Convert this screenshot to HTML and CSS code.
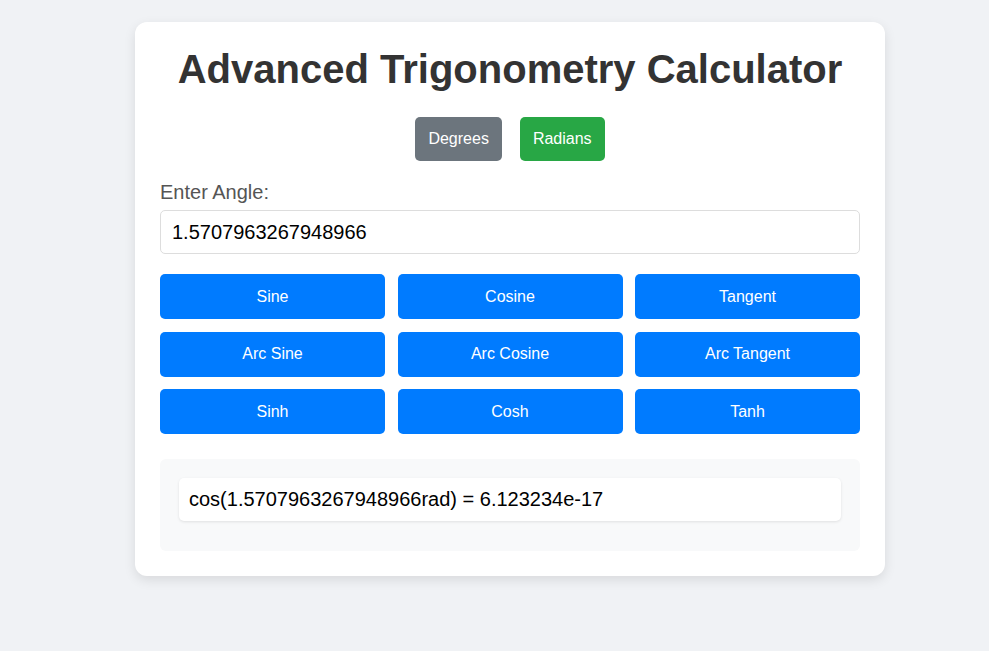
FILE: index.html
```html
<!DOCTYPE html>
<html lang="en">
<head>
<meta charset="utf-8">
<title>Advanced Trigonometry Calculator</title>
<link rel="stylesheet" href="styles.css">
</head>
<body>
<div class="card">
  <h1 class="title">Advanced Trigonometry Calculator</h1>
  <div class="modes">
    <button class="mode mode-deg">Degrees</button>
    <button class="mode mode-rad">Radians</button>
  </div>
  <label class="label" for="angle">Enter Angle:</label>
  <input class="input" id="angle" type="text" value="1.5707963267948966">
  <div class="grid">
    <button class="fn">Sine</button>
    <button class="fn">Cosine</button>
    <button class="fn">Tangent</button>
    <button class="fn">Arc Sine</button>
    <button class="fn">Arc Cosine</button>
    <button class="fn">Arc Tangent</button>
    <button class="fn">Sinh</button>
    <button class="fn">Cosh</button>
    <button class="fn">Tanh</button>
  </div>
  <div class="results">
    <div class="result">cos(1.5707963267948966rad) = 6.123234e-17</div>
  </div>
</div>
</body>
</html>
```

FILE: styles.css
```css
* { box-sizing: border-box; }
html, body { margin: 0; padding: 0; }
body {
  background: #f0f2f5;
  font-family: "Liberation Sans", Arial, sans-serif;
  height: 651px;
  overflow: hidden;
}
.card {
  width: 750px;
  margin: 22px 0 0 135px;
  padding: 25px;
  background: #fff;
  border-radius: 12px;
  box-shadow: 0 4px 12px rgba(0, 0, 0, 0.1);
}
.title {
  margin: 0;
  font-size: 40px;
  line-height: 45px;
  font-weight: bold;
  color: #333;
  text-align: center;
}
.modes {
  display: flex;
  justify-content: center;
  gap: 18px;
  margin-top: 25px;
}
.mode {
  height: 44px;
  padding: 0 13px;
  border: none;
  border-radius: 5px;
  color: #fff;
  font-family: inherit;
  font-size: 16px;
}
.mode-deg { background: #6c757d; }
.mode-rad { background: #28a745; }
.label {
  display: block;
  margin-top: 20px;
  font-size: 20px;
  line-height: 23px;
  color: #555;
}
.input {
  display: block;
  width: 100%;
  height: 44px;
  margin-top: 6px;
  padding: 0 11px;
  border: 1px solid #ddd;
  border-radius: 5px;
  font-family: inherit;
  font-size: 20px;
  color: #000;
}
.grid {
  display: grid;
  grid-template-columns: repeat(3, 1fr);
  gap: 12.5px;
  margin-top: 20px;
}
.fn {
  height: 45px;
  border: none;
  border-radius: 5px;
  background: #007bff;
  color: #fff;
  font-family: inherit;
  font-size: 16px;
}
.results {
  margin-top: 25px;
  padding: 19px 19px 30px;
  background: #f8f9fa;
  border-radius: 6px;
}
.result {
  padding: 10px;
  background: #fff;
  border-radius: 5px;
  box-shadow: 0 1px 3px rgba(0, 0, 0, 0.1);
  font-size: 20px;
  line-height: 23px;
  color: #000;
}
```
